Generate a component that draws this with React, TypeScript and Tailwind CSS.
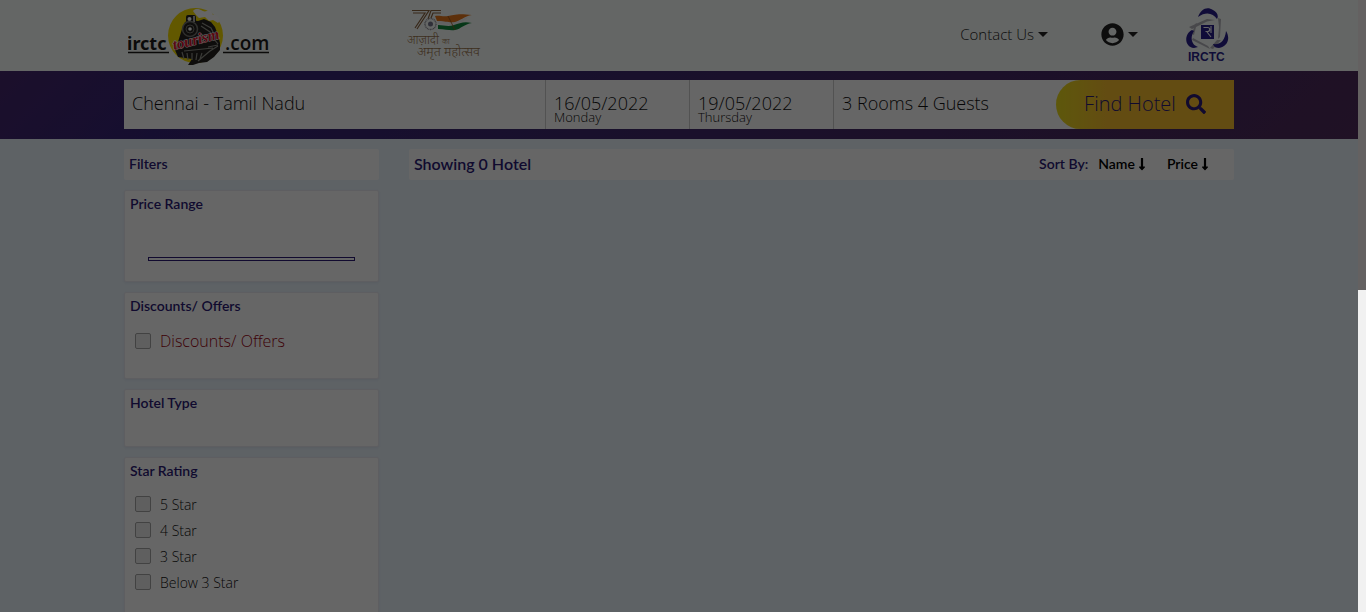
import type { ReactNode } from 'react';
import { FaSearch, FaUserCircle, FaLongArrowAltDown } from 'react-icons/fa';

const stars = ['5 Star', '4 Star', '3 Star', 'Below 3 Star'];

function Caret() {
  return (
    <svg width="10" height="5" viewBox="0 0 10 5" aria-hidden="true">
      <path d="M0 0h10L5 5z" fill="#222" />
    </svg>
  );
}

function TourismLogo() {
  return (
    <a href="#home" aria-label="IRCTC Tourism" className="block">
      <svg width="142" height="58" viewBox="0 0 142 58">
        <circle cx="67.5" cy="28.5" r="27.5" fill="#f5dc00" />
        <path d="M54 22l3-7 5-2 8 1 6-2 7 3 4 5 3 8 2 8v7l-6 7-7 5-8 1-6 2h-5l4-6-14-2-3-7 3-8z" fill="#24221f" />
        <path d="M65 4c2-3 6-2 8-1s3 2 6 1 5 1 6 4c3-1 5 2 7 6l-2 2-5-3-4 1-4-4-6 1-3-3z" fill="#fff" />
        <rect x="58" y="8" width="10" height="8" rx="2" fill="#24221f" />
        <circle cx="61.5" cy="12" r="2" fill="#fff" />
        <path d="M66 9v6" stroke="#ddd" strokeWidth="1.5" />
        <circle cx="62" cy="22" r="7.5" fill="#24221f" stroke="#77776f" strokeWidth="1.5" />
        <circle cx="62" cy="22" r="4" fill="none" stroke="#77776f" strokeWidth="1" />
        <circle cx="62" cy="22" r="1.8" fill="#fff" />
        <path d="M74 16l9 5 4 8M73 19l9 6 3 6M72 26l6 5M54 45l2 7M59 46l1 7M64 46v7M69 46l-1 7M74 46l-2 6M56 44l29-3M80 40l10-2M70 54l12-10 8-5M86 32l4 5" fill="none" stroke="#92928a" strokeWidth="1.2" />
        <text x="-1" y="43" fontSize="18" fontWeight="700" fill="#1d1d1b" fontFamily="'Noto Sans', sans-serif">irctc</text>
        <text x="97" y="43" fontSize="19" fontWeight="600" fill="#1d1d1b" fontFamily="'Open Sans', sans-serif">.com</text>
        <path d="M0 45.5h41M95 45.5h46" stroke="#1d1d1b" strokeWidth="1.5" />
        <text x="46" y="43" fontSize="15" fontWeight="700" fontStyle="italic" fill="#e0102a" stroke="#fff" strokeWidth="1" paintOrder="stroke" fontFamily="'Liberation Serif', serif" transform="rotate(-14 46 43)">tourism</text>
      </svg>
    </a>
  );
}

function AmritLogo() {
  return (
    <svg width="76" height="54" viewBox="0 0 76 54" role="img" aria-label="Azadi ka Amrit Mahotsav">
      <path d="M5 1.5h17L10 20M6 4h12L8 19" fill="none" stroke="#8a6440" strokeWidth="1.2" />
      <path d="M34 1.5H24L21 10M34 4h-8l-2 5" fill="none" stroke="#8a6440" strokeWidth="1.2" />
      <circle cx="23.5" cy="15" r="5.5" fill="none" stroke="#8f8f98" strokeWidth="1.4" strokeDasharray="1 0.6" />
      <circle cx="23.5" cy="15" r="2.5" fill="#77778c" />
      <path d="M28 7c4-1 8 1 13 0s10-3 24-1c-8 1-12 6-17 8-5 1-7-1-18-2z" fill="#e8791c" />
      <path d="M31 12c8 0 11 2 17 1 6-2 8-4 14-5-5 3-8 7-14 8s-9-1-17-1z" fill="#f4f4f4" />
      <path d="M31 16c6 0 10 2 16 0s10-4 18-2c-8 1-11 6-17 7-5 1-9-1-17-1z" fill="#128a3c" />
      <path d="M41 7l7 14" stroke="#96521a" strokeWidth="0.8" />
      <text x="0" y="35" fontSize="12" fill="#9a744c" fontFamily="'Noto Sans', sans-serif">आज़ादी</text>
      <text x="35" y="35" fontSize="8" fill="#9a744c" fontFamily="'Noto Sans', sans-serif">का</text>
      <text x="10" y="47" fontSize="13" fill="#9a744c" fontFamily="'Noto Sans', sans-serif">अमृत महोत्सव</text>
    </svg>
  );
}

function IrctcLogo() {
  return (
    <svg width="44" height="56" viewBox="0 0 44 56" role="img" aria-label="IRCTC">
      <g fill="#b4b4bb">
        <path d="M4 20L22 12l8 1-8 1.5L7 22z" />
        <path d="M33 11l3 1-1 18-2 2 1-12z" />
        <path d="M36 33L28 42l-3-1 7-8z" />
        <path d="M8 31l15 8 2 3-18-9z" />
        <path d="M12 16l-3 12-2-1 3-10z" />
      </g>
      <path d="M13 10C16 2 22-1 28 3c4 2 6 6 4 9-4-6-11-8-19-2z" fill="#2a1f8c" />
      <path d="M7 23C-1 27-1 40 9 41l4-1C6 38 5 30 9 24z" fill="#2a1f8c" />
      <path d="M41 24c5 8 1 16-7 17-3 0-5-1-6-4 8 1 12-4 13-13z" fill="#2a1f8c" />
      <rect x="16" y="18" width="13" height="14" fill="#2a1f8c" />
      <path d="M18.500 20.500h4c3 0 3 4 0 4h-2M22 25l4 5M26 19v7" fill="none" stroke="#fff" strokeWidth="1.100" />
      <text x="3" y="54" fontSize="12" fontWeight="700" fill="#2a1f8c" fontFamily="'Liberation Sans', sans-serif">IRCTC</text>
    </svg>
  );
}

function Check({ id, label, className }: { id: string; label: string; className: string }) {
  return (
    <div className="flex h-[26px] items-center gap-[9px] pl-[5px]">
      <input id={id} type="checkbox" className="size-4 appearance-none rounded-[2px] border border-[#a5a5a5] bg-[#eeeeee]" />
      <label htmlFor={id} className={className}>{label}</label>
    </div>
  );
}

function FilterCard({ title, className, children }: { title: string; className: string; children?: ReactNode }) {
  return (
    <section className={'rounded-[2px] border border-[#ececf2] bg-white px-[5px] pt-[3px] shadow-[0_1px_3px_rgba(60,60,110,0.08)] ' + className}>
      <h3 className="font-[Lato] text-[14px] leading-5 font-semibold text-[#2b1a75]">{title}</h3>
      {children}
    </section>
  );
}

function DateField({ label, value, day }: { label: string; value: string; day: string }) {
  return (
    <div className="flex w-36 flex-col border-l border-[#ccc] pt-[13px] pl-2">
      <input aria-label={label} defaultValue={value} className="h-5 w-full" />
      <span className="text-[13px] leading-2">{day}</span>
    </div>
  );
}

export default function App() {
  return (
    <div className="flex h-screen overflow-hidden bg-[#ebf5fd] font-['Open_Sans',sans-serif] font-light text-[#111]">
      <div className="flex min-w-0 flex-1 flex-col">
        <header className="h-[71px] shrink-0 bg-[#fbfffc]">
          <div className="mx-auto flex h-full w-full max-w-[1110px] items-center justify-between pr-[5px] pl-1">
            <div className="flex items-center gap-[137px]">
              <TourismLogo />
              <AmritLogo />
            </div>
            <nav className="flex items-center pb-[2px]">
              <button className="mr-[53px] flex items-center gap-1 text-[15px] text-[#222]">Contact Us <Caret /></button>
              <button aria-label="Account" className="mr-[47px] flex items-center gap-1 text-[#222]"><FaUserCircle size={23} /><Caret /></button>
              <IrctcLogo />
            </nav>
          </div>
        </header>
        <form className="h-[68px] shrink-0 bg-linear-135 from-[#46266c] via-[#362578] via-15% to-[#502b5c] py-[9px]">
          <div className="mx-auto flex h-[49px] w-full max-w-[1110px] bg-white text-[18px]">
            <input aria-label="Destination" defaultValue="Chennai - Tamil Nadu" className="min-w-0 flex-1 px-2 pb-[2px]" />
            <DateField label="Check-in" value="16/05/2022" day="Monday" />
            <DateField label="Check-out" value="19/05/2022" day="Thursday" />
            <input aria-label="Guests" defaultValue="3 Rooms 4 Guests" className="w-[223px] border-l border-[#ccc] px-2 pb-[2px]" />
            <button type="button" className="flex w-[178px] items-center justify-center gap-[10px] rounded-l-full bg-linear-to-r from-[#eadb1c] to-[#f8bd2e] to-30% pb-[2px] text-[20px] text-[#2b1a75]">Find Hotel <FaSearch size={20} /></button>
          </div>
        </form>
        <main className="mx-auto flex w-full max-w-[1110px] items-start gap-[30px] pt-[10px]">
          <aside className="flex w-[255px] shrink-0 flex-col gap-[10px]">
            <h2 className="rounded-[2px] bg-white px-[5px] pt-[5px] pb-[6px] font-[Lato] text-[14px] leading-5 font-semibold text-[#2b1a75]">Filters</h2>
            <FilterCard title="Price Range" className="pb-[20px]">
              <div className="mx-[18px] mt-[43px] h-1 border border-[#2b1a75]" />
            </FilterCard>
            <FilterCard title="Discounts/ Offers" className="pb-[24px]">
              <div className="mt-3">
                <Check id="offers" label="Discounts/ Offers" className="text-[16px] text-[#99000f]" />
              </div>
            </FilterCard>
            <FilterCard title="Hotel Type" className="pb-[33px]" />
            <FilterCard title="Star Rating" className="pb-[30px]">
              <div className="mt-[10px]">
                {stars.map((s) => <Check key={s} id={s} label={s} className="text-[14px]" />)}
              </div>
            </FilterCard>
          </aside>
          <section className="flex min-w-0 flex-1 items-center justify-between rounded-[2px] bg-white pt-[5px] pr-[22px] pb-[6px] pl-[5px] font-[Lato]">
            <h1 className="text-[16px] leading-5 font-semibold text-[#2b1a75]">Showing 0 Hotel</h1>
            <div className="flex items-center text-[14px] leading-5 font-semibold text-black">
              <span className="mr-[10px] text-[#2b1a75]">Sort By:</span>
              <button className="mr-[18px] flex items-center">Name <FaLongArrowAltDown size={14} /></button>
              <button className="flex items-center">Price <FaLongArrowAltDown size={14} /></button>
            </div>
          </section>
        </main>
      </div>
      <div className="pointer-events-none fixed inset-0 bg-black/60" />
      <div aria-hidden="true" className="relative w-2 shrink-0 bg-[#f1f1f1]">
        <div className="h-[290px] bg-[#646161]" />
      </div>
    </div>
  );
}
